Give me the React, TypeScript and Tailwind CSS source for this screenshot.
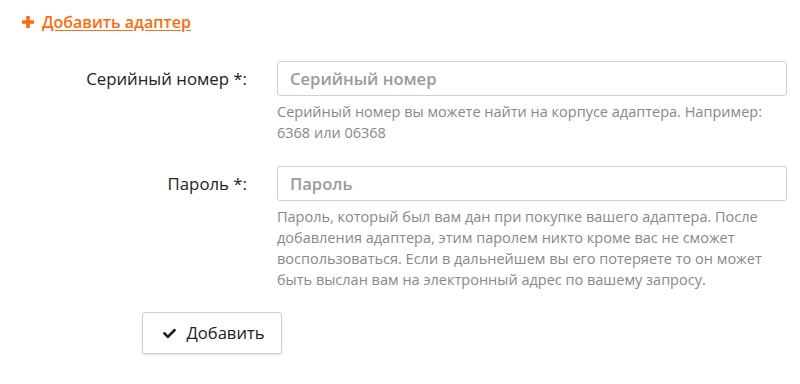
import React from "react";
import { FaCheck } from "react-icons/fa";

const font = { fontFamily: '"Open Sans", "Liberation Sans", sans-serif' };

function Field({
  label,
  placeholder,
  help,
  type = "text",
}: {
  label: string;
  placeholder: string;
  help: string;
  type?: string;
}) {
  return (
    <div className="flex">
      <label className="shrink-0 w-[227px] h-[35px] flex items-center justify-end text-[16.8px] text-[#222]">
        {label}
      </label>
      <div className="shrink-0 ml-[30px] w-[510px]">
        <input
          type={type}
          placeholder={placeholder}
          className="w-full h-[35px] px-[12px] border border-[#cfcfcf] rounded-[3px] text-[16.6px] font-semibold text-[#333] placeholder:text-[#9a9a9a] outline-none"
        />
        <p className="mt-[5px] text-[14.5px] leading-[21px] text-[#888]">{help}</p>
      </div>
    </div>
  );
}

export default function App() {
  return (
    <div className="w-full h-[384px] bg-white px-5 pt-[11px] overflow-hidden" style={font}>
      <a href="#" className="flex items-center h-[22px] text-[16px] font-semibold text-[#ff6a10] underline underline-offset-2">
        <svg width="12" height="12" viewBox="0 0 12 12" className="ml-[2px] mr-[8px]">
          <path d="M4.2 0h3.6v4.2H12v3.6H7.8V12H4.2V7.8H0V4.2h4.2z" fill="#ff6a10" />
        </svg>
        Добавить адаптер
      </a>

      <div className="mt-[28px] flex flex-col gap-[23px]">
        <Field
          label="Серийный номер *:"
          placeholder="Серийный номер"
          help="Серийный номер вы можете найти на корпусе адаптера. Например: 6368 или 06368"
        />
        <Field
          label="Пароль *:"
          placeholder="Пароль"
          type="password"
          help="Пароль, который был вам дан при покупке вашего адаптера. После добавления адаптера, этим паролем никто кроме вас не сможет воспользоваться. Если в дальнейшем вы его потеряете то он может быть выслан вам на электронный адрес по вашему запросу."
        />
      </div>

      <button className="mt-[22px] ml-[122px] w-[140px] h-[42px] flex items-center justify-center gap-[10px] border border-[#cfcfcf] rounded-[3px] bg-white shadow-[0_1px_2px_rgba(0,0,0,0.12)] text-[16.6px] text-[#222]">
        <FaCheck className="w-[13px] h-[13px] ml-[4px] text-[#222]" />
        Добавить
      </button>
    </div>
  );
}
